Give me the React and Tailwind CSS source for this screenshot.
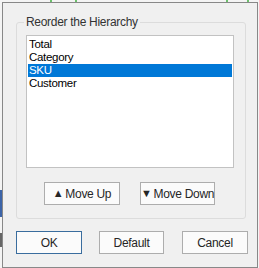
import React from "react";

export default function App() {
  const items = ["Total", "Category", "SKU", "Customer"];
  const btn =
    "h-[23px] border bg-[#fbfbfb] text-[12px] text-[#262626] flex items-center justify-center whitespace-nowrap";
  return (
    <div
      className="relative w-[259px] h-[268px] bg-[#f4f4f4] overflow-hidden tracking-[-0.3px]"
      style={{ fontFamily: '"Liberation Sans", Arial, sans-serif' }}
    >
      {/* background bits */}
      <div className="absolute left-[50px] top-0 w-[2px] h-[2px] bg-[#6cc06c]" />
      <div className="absolute left-[75px] top-0 w-[2px] h-[2px] bg-[#6cc06c]" />
      <div className="absolute left-[226px] top-0 w-[2px] h-[2px] bg-[#6cc06c]" />
      <div className="absolute left-[247px] top-0 w-[2px] h-[2px] bg-[#6cc06c]" />
      <div className="absolute left-0 top-[190px] w-[2px] h-[27px] bg-[#3d64a8]" />
      <div className="absolute left-0 top-[233px] w-[2px] h-[14px] bg-[#666]" />

      <div className="ml-[2px] mt-[2px] w-[256px] h-[266px] border border-[#888] bg-[#f0f0f0] flex flex-col">
        <fieldset className="ml-[13px] mt-[12px] w-[230px] h-[204px] border border-[#dcdcdc] rounded-[3px] flex flex-col">
          <legend className="ml-[7px] px-[2px] text-[12px] leading-[15px] text-[#333]">
            Reorder the Hierarchy
          </legend>
          <div className="ml-[9px] mt-[5px] w-[208px] h-[133px] border border-[#c2c2c2] bg-white pt-[2px] px-[1px]">
            {items.map((it) => (
              <div
                key={it}
                className={
                  "h-[13px] leading-[13px] text-[11.5px] pl-[1px] " +
                  (it === "SKU" ? "bg-[#0078d7] text-white" : "text-black")
                }
              >
                {it}
              </div>
            ))}
          </div>
          <div className="flex gap-[20px] ml-[27px] mt-[14px]">
            <button className={btn + " w-[76px] border-[#adadad] gap-[2px]"}>
              <span className="text-[11px]">▲</span>
              <span>Move Up</span>
            </button>
            <button className={btn + " w-[75px] border-[#adadad] gap-[2px]"}>
              <span className="text-[11px]">▼</span>
              <span>Move Down</span>
            </button>
          </div>
        </fieldset>
        <div className="flex ml-[13px] mt-[12px] gap-[16px]">
          <button className={btn + " w-[66px] border-[#3a6d9e]"}>OK</button>
          <button className={btn + " w-[65px] border-[#adadad] ml-[1px]"}>Default</button>
          <button className={btn + " w-[66px] border-[#adadad] ml-[2px]"}>Cancel</button>
        </div>
      </div>
    </div>
  );
}
